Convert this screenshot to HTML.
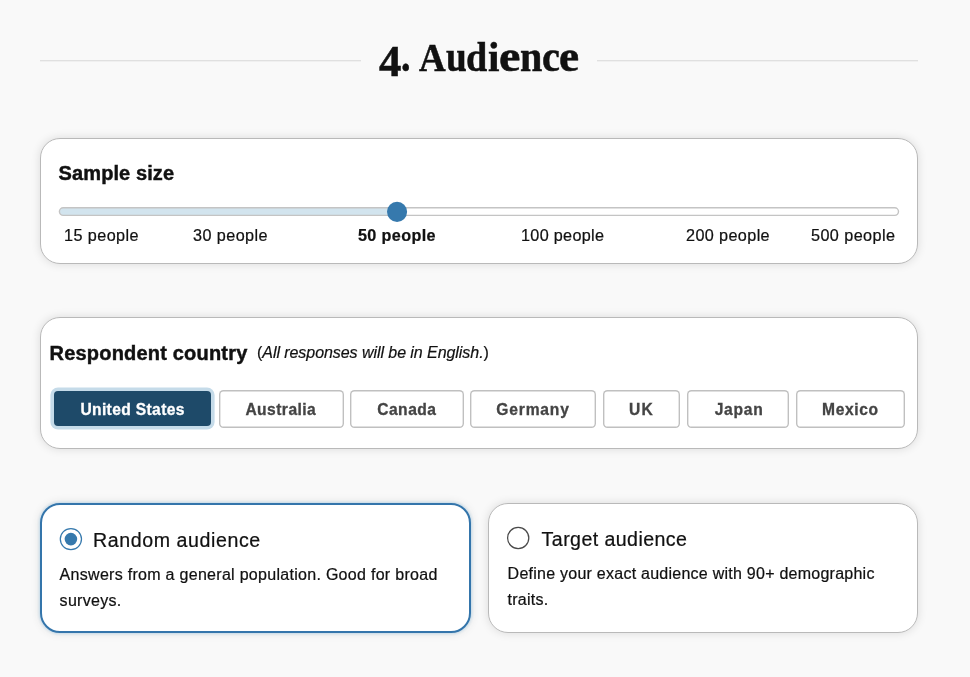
<!DOCTYPE html>
<html lang="en">
<head>
<meta charset="utf-8">
<title>4. Audience</title>
<style>
*{box-sizing:border-box;margin:0;padding:0}
html,body{width:970px;height:677px;overflow:hidden}
body{background:#f9f9f9;font-family:"Liberation Sans",sans-serif;color:#111;position:relative}
.abs{position:absolute;white-space:nowrap;line-height:1}
.hr{position:absolute;height:2px;background:linear-gradient(#e0e0e0 50%,#f0f0f0 50%);top:60px}
h1{position:absolute;left:379px;top:36px;transform:scaleY(1.035);transform-origin:0 35px;font-family:"Liberation Serif",serif;font-weight:700;font-size:42px;line-height:1;white-space:nowrap;color:#111}
h1 span{line-height:0;display:inline-block;transform-origin:0 14px;-webkit-text-stroke:.5px}
/*TITLE-GLYPHS*/
.g0{font-size:43.5px;position:relative;top:4.5px;transform:scale(1.029,1);margin-left:0.00px}
.g1{transform:scale(0.907,1);margin-left:0.60px}
.g2{font-size:40px;transform:scale(0.924,0.96);margin-left:-3.70px}
.g3{transform:scale(0.888,1);margin-left:-1.60px}
.g4{transform:scale(0.908,0.955);margin-left:-3.40px}
.g5{transform:scale(0.981,0.955);margin-left:-1.00px}
.g6{transform:scale(1.150,1);margin-left:-0.60px}
.g7{transform:scale(0.955,1);margin-left:2.20px}
.g8{transform:scale(0.958,1);margin-left:-2.00px}
.g9{transform:scale(1.078,1);margin-left:-1.20px}
/*END-TITLE-GLYPHS*/
.card{position:absolute;background:#fff;border:1px solid #b9b9b9;border-radius:20px;box-shadow:0 0 10px rgba(0,0,0,.125)}
.h2{-webkit-text-stroke:.45px;font-weight:700;font-size:20px;color:#111;letter-spacing:.15px}
.tick{-webkit-text-stroke:.22px;font-size:16.2px;color:#111;letter-spacing:.43px}
.btn{position:absolute;top:389.9px;height:38px;border-radius:4.5px;background:#fff;box-shadow:inset 0 0 0 1.4px #c0c0c0;color:#444;font-weight:700;font-size:15.6px;letter-spacing:.4px;-webkit-text-stroke:.3px;text-align:center;line-height:38.6px;white-space:nowrap}
.btn span{display:inline-block;text-indent:0;transform:translateY(.6px)}
.btn.sel{top:391px;height:35.3px;border-radius:4px;background:#1e4a69;box-shadow:0 0 0 3.6px #c5dbe9;color:#fff;line-height:36.6px;letter-spacing:.36px}
.opt{-webkit-text-stroke:.22px;font-size:19.6px;color:#111}
.desc{position:absolute;-webkit-text-stroke:.22px;font-size:16px;letter-spacing:.29px;line-height:25.9px;color:#111}
</style>
</head>
<body>
<div id="wrap" style="position:absolute;left:0;top:0;width:970px;height:677px;will-change:transform">
<div class="hr" style="left:40px;width:321px"></div>
<h1 aria-label="4. Audience"><span class="g0">4</span><span class="g1">.</span> <span class="g2">A</span><span class="g3">u</span><span class="g4">d</span><span class="g5">i</span><span class="g6">e</span><span class="g7">n</span><span class="g8">c</span><span class="g9">e</span></h1>
<div class="hr" style="left:597px;width:321px"></div>

<div class="card" style="left:40px;top:138px;width:878px;height:126px"></div>
<div class="abs h2" style="left:58.6px;top:163.4px;letter-spacing:.1px">Sample size</div>
<svg class="abs" style="left:0;top:195px" width="970" height="34" viewBox="0 195 970 34">
<rect x="59.4" y="207.8" width="839.1" height="7.6" rx="3.8" fill="#fff"/>
<rect x="59.4" y="207.8" width="340" height="7.6" rx="3.8" fill="#d2e4ee"/>
<rect x="59.4" y="207.8" width="839.1" height="7.6" rx="3.8" fill="none" stroke="#c4c4c4" stroke-width="1.4"/>
<circle cx="397.05" cy="211.85" r="10.05" fill="#3679ad"/>
</svg>
<div class="abs tick" style="left:64px;top:227.2px">15 people</div>
<div class="abs tick" style="left:193px;top:227.2px">30 people</div>
<div class="abs tick" style="left:358px;top:227.2px;font-weight:700;letter-spacing:.36px">50 people</div>
<div class="abs tick" style="left:521px;top:227.2px;letter-spacing:.32px">100 people</div>
<div class="abs tick" style="left:686px;top:227.2px;letter-spacing:.39px">200 people</div>
<div class="abs tick" style="left:811px;top:227.2px">500 people</div>

<div class="card" style="left:40px;top:317px;width:878px;height:132px"></div>
<div class="abs h2" style="left:49.6px;top:343.2px;letter-spacing:.19px">Respondent country</div>
<div class="abs" style="left:257px;top:345px;font-size:16px;letter-spacing:-.06px;-webkit-text-stroke:.2px">(<i>All responses will be in English.</i>)</div>
<div class="btn sel" style="left:54.1px;width:157px"><span>United States</span></div>
<div class="btn" style="left:219px;width:124.6px;text-indent:-1px;letter-spacing:.45px"><span>Australia</span></div>
<div class="btn" style="left:350px;width:113.7px;letter-spacing:.5px"><span>Canada</span></div>
<div class="btn" style="left:469.9px;width:126.2px;letter-spacing:.82px"><span>Germany</span></div>
<div class="btn" style="left:602.9px;width:77.3px;letter-spacing:1.3px"><span>UK</span></div>
<div class="btn" style="left:686.9px;width:102.3px;letter-spacing:.75px;text-indent:2px"><span>Japan</span></div>
<div class="btn" style="left:795.8px;width:109px;letter-spacing:.6px"><span>Mexico</span></div>

<div class="card" style="left:40px;top:503px;width:431px;height:130px;border:2px solid #3475ab;box-shadow:0 0 2.5px 1px #c5dbe9,0 0 10px rgba(0,0,0,.125)"></div>
<svg class="abs" style="left:55px;top:523px" width="32" height="32" viewBox="55 523 32 32">
<circle cx="70.9" cy="539.1" r="10.6" fill="#fff" stroke="#3679ad" stroke-width="1.25"/>
<circle cx="70.9" cy="539.1" r="6.3" fill="#3679ad"/>
</svg>
<div class="abs opt" style="left:93px;top:531px;letter-spacing:.58px">Random audience</div>
<div class="desc" style="left:59.6px;top:562.1px;width:410px">Answers from a general population. Good for broad<br>surveys.</div>

<div class="card" style="left:488px;top:503px;width:430px;height:130px"></div>
<svg class="abs" style="left:502px;top:522px" width="32" height="32" viewBox="502 522 32 32">
<circle cx="518.2" cy="538" r="10.6" fill="#fff" stroke="#4a4a4a" stroke-width="1.25"/>
</svg>
<div class="abs opt" style="left:541.6px;top:530.2px;letter-spacing:.42px">Target audience</div>
<div class="desc" style="left:507.6px;top:561.2px;width:410px;letter-spacing:.25px">Define your exact audience with 90+ demographic<br>traits.</div>
</div>
</body>
</html>
